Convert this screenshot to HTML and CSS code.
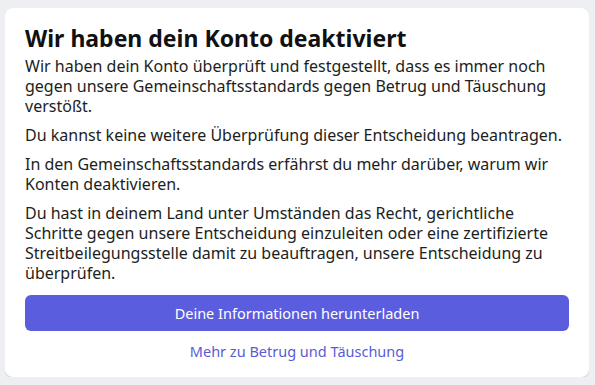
FILE: index.html
```html
<!DOCTYPE html>
<html lang="de">
<head>
    <meta charset="UTF-8">
    <title>Konto deaktiviert</title>
    <link rel="stylesheet" href="styles.css">
</head>
<body>

<div class="card">
    <h1>Wir haben dein Konto deaktiviert</h1>

    <p>Wir haben dein Konto überprüft und festgestellt, dass es immer noch gegen unsere Gemeinschaftsstandards gegen Betrug und Täuschung verstößt.</p>
    <p>Du kannst keine weitere Überprüfung dieser Entscheidung beantragen.</p>
    <p>In den Gemeinschaftsstandards erfährst du mehr darüber, warum wir Konten deaktivieren.</p>
    <p>Du hast in deinem Land unter Umständen das Recht, gerichtliche Schritte gegen unsere Entscheidung einzuleiten oder eine zertifizierte Streitbeilegungsstelle damit zu beauftragen, unsere Entscheidung zu überprüfen.</p>

    <button class="primary">Deine Informationen herunterladen</button>
    <a class="link" href="#">Mehr zu Betrug und Täuschung</a>
</div>

</body>
</html>
```

FILE: styles.css
```css
body {
    font-family: "Noto Sans", sans-serif;
    margin: 8px 6px 7px 5px;
    background-color: #eeeff3;
    color: #1c1e21;
}
.card {
    background-color: #fff;
    border-radius: 8px;
    box-shadow: 0px 1px 2px rgba(0, 0, 0, 0.15);
    padding: 16px 20px 16px 20px;
}
h1 {
    font-size: 23px;
    line-height: 28px;
    margin: 0 0 4px 0;
    color: #111;
}
p {
    font-size: 16px;
    line-height: 20px;
    margin: 0 0 9px 0;
}
.primary {
    display: block;
    width: 100%;
    height: 36px;
    margin-top: 12px;
    font-family: inherit;
    font-size: 14.5px;
    color: #fff;
    background-color: #5b5ddf;
    border: none;
    border-radius: 6px;
}
.link {
    display: block;
    margin-top: 10px;
    text-align: center;
    font-size: 14.5px;
    line-height: 20px;
    color: #5a5bd6;
    text-decoration: none;
}
```
